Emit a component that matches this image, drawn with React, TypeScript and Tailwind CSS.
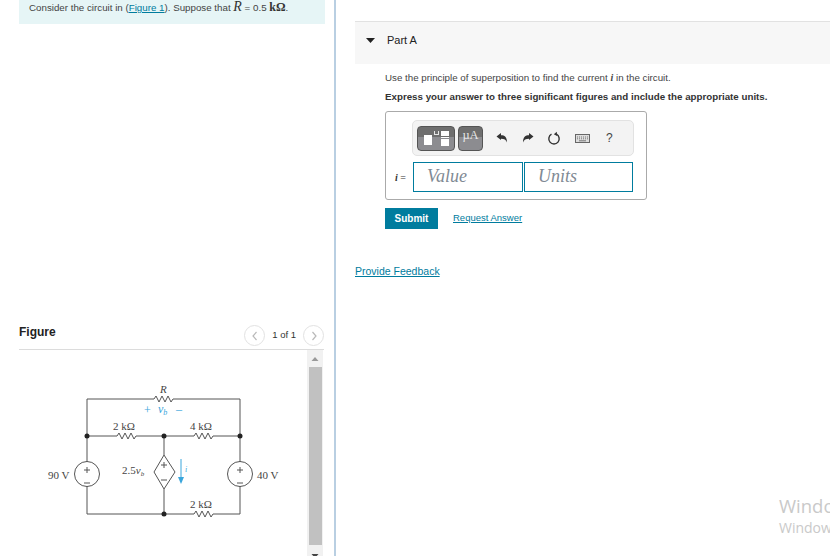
import React from "react";

const Circuit = () => (
    <svg width="270" height="150" viewBox="0 0 270 150" className="block">
        <g fill="none" stroke="#555" strokeWidth="1">
            <path d="M57 87V24H124l2-3 3 6 3-6 3 6 3-6 3 6 2-3H210V87" />
            <path d="M57 61H87l2-3 3 6 3-6 3 6 3-6 3 6 2-3H164l2-3 3 6 3-6 3 6 3-6 3 6 2-3H210" />
            <path d="M57 111V139H164l2-3 3 6 3-6 3 6 3-6 3 6 2-3H210V111" />
            <path d="M134 61V80M134 114V139" />
            <path d="M134 80L145 97 134 114 124 97Z" />
            <circle cx="57" cy="99" r="12.5" />
            <circle cx="210" cy="99" r="12.5" />
            <path d="M57 92v6M54 95h6M54 108h6M210 92v6M207 95h6M207 108h6M134 87v6M131 90h6M131 105h6" />
        </g>
        <g fill="#222">
            <circle cx="57" cy="61" r="2.5" />
            <circle cx="134" cy="61" r="2.5" />
            <circle cx="210" cy="61" r="2.5" />
            <circle cx="134" cy="139" r="2.5" />
        </g>
        <path d="M151 84V104" stroke="#3aa6dc" strokeWidth="1" />
        <path d="M148 102h6l-3 7Z" fill="#3aa6dc" />
        <g fontFamily="'Liberation Serif', serif" fontSize="11" fill="#444">
            <text x="130" y="18" fontStyle="italic">R</text>
            <text x="83" y="55">2 kΩ</text>
            <text x="160" y="55">4 kΩ</text>
            <text x="160" y="133">2 kΩ</text>
            <text x="18" y="104">90 V</text>
            <text x="227" y="104">40 V</text>
            <text x="92" y="99">2.5<tspan fontStyle="italic">v</tspan><tspan fontSize="7" fontStyle="italic" dy="2">b</tspan></text>
        </g>
        <g fontFamily="'Liberation Serif', serif" fontSize="12" fill="#3aa6dc">
            <text x="114" y="39">+</text>
            <text x="128" y="38" fontStyle="italic">v<tspan fontSize="8" dy="2">b</tspan></text>
            <text x="146" y="38">–</text>
            <text x="155" y="97" fontSize="8" fontStyle="italic">i</text>
        </g>
    </svg>
);

const Pager = ({ d }: { d: string }) => (
    <span className="flex h-[21px] w-[21px] items-center justify-center rounded-full border border-[#e2e2e2] bg-white">
        <svg width="8" height="10" viewBox="0 0 8 10" fill="none" stroke="#b9b9b9" strokeWidth="1.2">
            <path d={d} />
        </svg>
    </span>
);

const LeftPanel = () => (
    <div className="flex h-full w-[336px] shrink-0 flex-col border-r-2 border-[#b9cfe2]">
        <div className="ml-[19px] flex h-6 w-[306px] items-start bg-[#e6f5f6] pl-[10px] text-[9.75px] leading-[14px] text-[#444]">
            <span>Consider the circuit in (<span className="text-[#007c9e] underline">Figure 1</span>). Suppose that <span className="font-['Liberation_Serif'] text-[14px] italic text-[#333]">R</span> = 0.5 <span className="font-['Liberation_Serif'] text-[12px] font-bold text-[#333]">kΩ</span>.</span>
        </div>
        <div className="ml-[19px] mt-[300px] flex h-[26px] w-[305px] items-start justify-between border-b border-[#dcdcdc]">
            <span className="mt-[1px] text-[12px] font-bold leading-[14px] text-[#222]">Figure</span>
            <div className="mt-[1px] flex items-center">
                <Pager d="M5.5 1 2 5l3.5 4" />
                <span className="mx-[7px] text-[9.5px] text-[#333]">1 of 1</span>
                <Pager d="M2.5 1 6 5 2.5 9" />
            </div>
        </div>
        <div className="ml-[19px] flex min-h-0 w-[304px] flex-1">
            <div className="mt-[25px] w-[288px] shrink-0 pl-[11px]">
                <Circuit />
            </div>
            <div className="flex h-full w-4 shrink-0 flex-col items-center overflow-hidden bg-[#f1f1f1]">
                <svg width="8" height="6" viewBox="0 0 8 6" className="mb-[5px] mt-[6px] shrink-0"><path d="M4 1l3.5 4h-7Z" fill="#999" /></svg>
                <div className="h-[178px] w-[13px] shrink-0 bg-[#c1c1c1]" />
                <svg width="8" height="6" viewBox="0 0 8 6" className="mt-[8px] shrink-0"><path d="M4 5 .5 1h7Z" fill="#444" /></svg>
            </div>
        </div>
    </div>
);

const TemplateIcon = () => (
    <span className="flex h-[25px] w-[38px] items-center justify-center gap-[2px] rounded-[4px] border border-[#555] bg-[linear-gradient(#6e6e6e_0_42%,#8c8c90_42%_100%)]">
        <span className="mt-[4px] h-[10px] w-[8px] bg-white" />
        <span className="-mt-[11px] h-[4px] w-[5px] border-x border-b border-[#e5e5e5]" />
        <span className="flex flex-col gap-[1px]">
            <span className="h-[5px] w-[8px] bg-white" />
            <span className="h-[1px] w-[8px] bg-white" />
            <span className="h-[7px] w-[8px] bg-white" />
        </span>
    </span>
);

const ToolIcon = ({ children }: { children: React.ReactNode }) => (
    <span className="flex h-4 w-4 items-center justify-center">{children}</span>
);

const Toolbar = () => (
    <div className="ml-[26px] flex h-[36px] w-[222px] items-center rounded-[5px] border border-[#e2e2e2] bg-[#f3f3f3] pl-[4px]">
        <TemplateIcon />
        <span className="ml-[3px] flex h-[25px] w-[25px] justify-center rounded-[4px] border border-[#555] bg-[linear-gradient(#6e6e6e_0_42%,#8c8c90_42%_100%)] font-['Liberation_Serif'] text-[12.5px] leading-[17px] text-[#e8e8e8]">µA</span>
        <span className="ml-[11px] flex items-center gap-[10px]">
            <ToolIcon>
                <svg width="12" height="12" viewBox="0 0 12 12"><path d="M.5 4.500 5 1v2.300c3.600 0 6 1.800 6 7.200-1-2.800-2.800-3.700-6-3.700V8Z" fill="#333" /></svg>
            </ToolIcon>
            <ToolIcon>
                <svg width="12" height="12" viewBox="0 0 12 12"><path d="M11.500 4.500 7 1v2.300c-3.600 0-6 1.800-6 7.200 1-2.800 2.800-3.700 6-3.700V8Z" fill="#333" /></svg>
            </ToolIcon>
            <ToolIcon>
                <svg width="14" height="14" viewBox="0 0 14 14" fill="none"><path d="M4.500 3.200a5.200 5.200 0 1 0 5 0" stroke="#333" strokeWidth="1.400" /><path d="M9.800.8 6.800 3.300l3.300 1.700Z" fill="#333" /></svg>
            </ToolIcon>
            <span className="ml-[2px] flex h-4 w-4 items-center justify-center">
                <svg width="15" height="9" viewBox="0 0 15 9"><rect x=".5" y=".5" width="14" height="8" fill="#ddd" stroke="#666" /><path d="M2 3h11M2 4.800h11" stroke="#777" strokeDasharray="1 1" /><path d="M4 6.800h7" stroke="#777" /></svg>
            </span>
            <span className="ml-[6px] text-[12px] leading-none text-[#444]">?</span>
        </span>
    </div>
);

const AnswerBox = () => (
    <div className="ml-[30px] mt-[8px] h-[89px] w-[262px] rounded-[3px] border border-[#aaa] pt-[8px]">
        <Toolbar />
        <div className="mt-[6px] flex items-center">
            <span className="w-[27px] pr-[7px] text-right font-['Liberation_Serif'] text-[10px] text-[#333]"><span className="font-bold italic">i</span> =</span>
            <div className="flex h-[30px] w-[110px] items-center border border-[#007c9e] pb-[1px] pl-[13px] font-['Liberation_Serif'] text-[18px] italic text-[#7f8a94]">Value</div>
            <div className="ml-[1px] flex h-[30px] w-[109px] items-center border border-[#007c9e] pb-[1px] pl-[13px] font-['Liberation_Serif'] text-[18px] italic text-[#7f8a94]">Units</div>
        </div>
    </div>
);

const RightPanel = () => (
    <div className="min-w-0 flex-1 pl-[19px] pt-[21px]">
        <div className="flex h-[43px] items-center border-t border-[#e2e2e2] bg-[#f7f7f7] pb-[6px]">
            <svg width="9" height="5" viewBox="0 0 9 5" className="ml-[11px]"><path d="M0 0h9L4.500 5Z" fill="#222" /></svg>
            <span className="ml-[12px] text-[11px] text-[#222]">Part A</span>
        </div>
        <p className="ml-[30px] mt-[7px] text-[9.75px] leading-[13px] text-[#444]">
            Use the principle of superposition to find the current <span className="font-['Liberation_Serif'] text-[10px] font-bold italic">i</span> in the circuit.
        </p>
        <p className="ml-[30px] mt-[6px] text-[9.75px] font-bold leading-[13px] text-[#333]">
            Express your answer to three significant figures and include the appropriate units.
        </p>
        <AnswerBox />
        <div className="ml-[30px] mt-[8px] flex items-center">
            <span className="flex h-[21px] w-[53px] items-center justify-center bg-[#007c9e] text-[10px] font-bold text-white">Submit</span>
            <span className="ml-[15px] text-[9.5px] text-[#007c9e] underline">Request Answer</span>
        </div>
        <p className="mt-[35px] text-[10.5px] leading-[14px] text-[#007c9e] underline">Provide Feedback</p>
    </div>
);

export default function App() {
    return (
        <div className="relative flex h-[556px] w-[830px] overflow-hidden bg-white font-['Liberation_Sans',Arial,sans-serif]">
            <LeftPanel />
            <RightPanel />
            {/* activation watermark over the page */}
            <div className="absolute left-[779px] top-[495px] whitespace-nowrap font-['Open_Sans',sans-serif] text-[#c9c9c9]">
                <div className="text-[18.5px] leading-[22px]">Windows</div>
                <div className="mt-[3px] text-[14px] leading-[16px]">Windows</div>
            </div>
        </div>
    );
}
